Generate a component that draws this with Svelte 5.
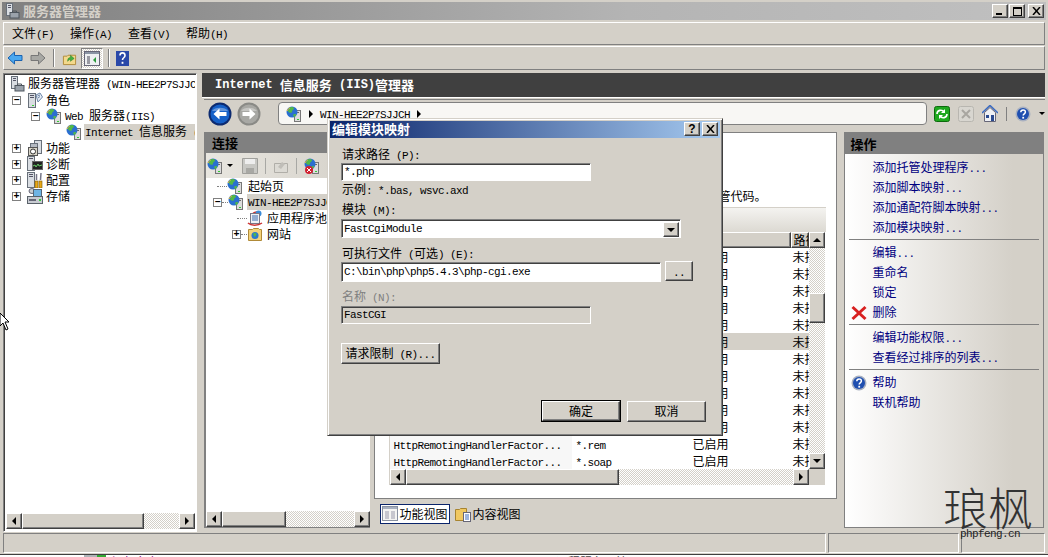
<script>
    const parts = (s) => s.match(/[\x00-\x7f]+|[^\x00-\x7f]+/g);
    const isLatin = (p) => p.charCodeAt(0) < 128;

    const menus = ["文件(F)", "操作(A)", "查看(V)", "帮助(H)"];

    const rows = [
        ["AboMapperCustom-123", "*.aspx", "已启用"],
        ["AssemblyResourceLoader", "WebResource.axd", "已启用"],
        ["ChartImageHandler", "ChartImg.axd", "已启用"],
        ["CGI-exe", "*.exe", "已启用"],
        ["ExtensionlessUrlHandler", "*.", "已启用"],
        ["HttpRemotingHandlerFactor...", "*.rem", "已启用"],
        ["FastCGI", "*.php", "已启用"],
        ["HttpHandler", "*.axd", "已启用"],
        ["ISAPI-dll", "*.dll", "已启用"],
        ["PageHandlerFactory", "*.aspx", "已启用"],
        ["SimpleHandlerFactory", "*.ashx", "已启用"],
        ["HttpRemotingHandlerFactor...", "*.rem", "已启用"],
        ["HttpRemotingHandlerFactor...", "*.soap", "已启用"]
    ];

    const actionGroups = [
        ["添加托管处理程序...", "添加脚本映射...", "添加通配符脚本映射...", "添加模块映射..."],
        ["编辑...", "重命名", "锁定", "删除"],
        ["编辑功能权限...", "查看经过排序的列表..."],
        ["帮助", "联机帮助"]
    ];
</script>

{#snippet t(s)}{#each parts(s) as p}{#if isLatin(p)}<span class="l">{p}</span>{:else}{p}{/if}{/each}{/snippet}

{#snippet server()}
    <svg class="ic" viewBox="0 0 16 16">
        <rect x="2.500" y="0.500" width="6" height="12" fill="#d9dde2" stroke="#68707a" />
        <rect x="4" y="2" width="3" height="1" fill="#556" />
        <rect x="4" y="4" width="3" height="1" fill="#556" />
        <rect x="6" y="9.500" width="9" height="5.500" fill="#9aa2ab" stroke="#4e565e" />
        <path d="M8.500 9.500v-1.500h4v1.500" fill="none" stroke="#4e565e" />
    </svg>
{/snippet}

{#snippet globe()}
    <svg class="ic" viewBox="0 0 16 16">
        <rect x="8.500" y="4.500" width="6" height="11" fill="#dcdcdc" stroke="#777" />
        <rect x="10" y="6" width="3" height="1" fill="#666" />
        <rect x="11" y="13" width="2" height="1" fill="#3c3" />
        <circle cx="6" cy="6" r="5.500" fill="#2a6fd0" />
        <path d="M3 2c2-1.500 5-1 5 .5s-2 1-2 3-2.500 1.500-4 0z" fill="#52b848" />
        <path d="M7 9c1-1.500 3.500-1 3 0s-1 2-2 2z" fill="#52b848" />
        <path d="M1 5c1-2 2-3 3-3" stroke="#f2c230" fill="none" />
    </svg>
{/snippet}

{#snippet roles()}
    <svg class="ic" viewBox="0 0 16 16">
        <rect x="1.500" y="1.500" width="7" height="14" fill="#d9dde2" stroke="#68707a" />
        <rect x="3" y="3" width="4" height="1" fill="#556" />
        <rect x="3" y="5" width="4" height="1" fill="#556" />
        <rect x="5" y="13" width="2" height="1" fill="#3c3" />
        <path d="M9 3l4-2 2.500 4-4.500 5z" fill="#e8edf5" stroke="#6c86a8" />
        <path d="M10.500 4l2.500-1M11 6l2-1.500" stroke="#6c86a8" />
    </svg>
{/snippet}

{#snippet features()}
    <svg class="ic" viewBox="0 0 16 16">
        <rect x="7.500" y="0.500" width="7" height="13" fill="#d9dde2" stroke="#68707a" />
        <rect x="3.500" y="3.500" width="7" height="5" fill="#b4bac2" stroke="#68707a" />
        <rect x="1.500" y="7.500" width="9" height="8" fill="#d8d5c8" stroke="#555" />
        <circle cx="6" cy="11.500" r="2.500" fill="#fff" stroke="#333" />
    </svg>
{/snippet}

{#snippet diag()}
    <svg class="ic" viewBox="0 0 16 16">
        <rect x="0.500" y="0.500" width="7" height="14" fill="#d9dde2" stroke="#68707a" />
        <rect x="2" y="2" width="4" height="1" fill="#556" />
        <rect x="5.500" y="5.500" width="10" height="8" fill="#222" stroke="#666" />
        <path d="M6 10l2-1 1 2 2-3 1 2 3-1" stroke="#6c6" fill="none" />
    </svg>
{/snippet}

{#snippet config()}
    <svg class="ic" viewBox="0 0 16 16">
        <rect x="0.500" y="0.500" width="7" height="15" fill="#d9dde2" stroke="#68707a" />
        <rect x="2" y="2" width="4" height="1" fill="#556" />
        <rect x="2" y="4" width="4" height="1" fill="#556" />
        <rect x="8" y="9" width="3" height="7" fill="#e8a818" stroke="#7a5808" stroke-width="0.600" />
        <rect x="12" y="9" width="3" height="7" fill="#e8a818" stroke="#7a5808" stroke-width="0.600" />
        <path d="M9.500 8V2M13.500 8l.5-7" stroke="#778" stroke-width="1.500" />
    </svg>
{/snippet}

{#snippet storage()}
    <svg class="ic" viewBox="0 0 16 16">
        <ellipse cx="5" cy="3" rx="3" ry="2.500" fill="#c8ccd0" stroke="#667" />
        <rect x="6.500" y="1.500" width="8" height="7" fill="#6eb4e4" stroke="#567" />
        <rect x="0.500" y="8.500" width="15" height="7" fill="#c8ccd2" stroke="#5a626a" />
        <rect x="2" y="11" width="7" height="2" fill="#667" />
        <rect x="12" y="11" width="2" height="2" fill="#3c3" />
    </svg>
{/snippet}

{#snippet tinyPool()}
    <svg class="ic" viewBox="0 0 16 16">
        <path d="M4 7a6 6 0 0 1 7-5" stroke="#c33" fill="none" stroke-width="1.500" />
        <circle cx="11.500" cy="3.500" r="3" fill="#3a8ad8" />
        <rect x="3.500" y="3.500" width="9" height="10" fill="#eef0f4" stroke="#778" />
        <path d="M5 6h6M5 8h6M5 10h6" stroke="#3a6ab0" />
        <path d="M1 13c3 3 10 3 14 0" stroke="#c33" fill="none" stroke-width="1.500" />
    </svg>
{/snippet}

{#snippet siteFolder()}
    <svg class="ic" viewBox="0 0 16 16">
        <path d="M1.500 14.500v-11h4l1-1h5l1 1h2v11z" fill="#f3d27a" stroke="#b08a38" />
        <circle cx="8" cy="9.500" r="3.500" fill="#2a7ad0" />
        <path d="M6 7.500l3-.5 .5 2-2 2z" fill="#52b848" />
    </svg>
{/snippet}

{#snippet arrow(color, edge, flip)}
    <svg class="arrow" class:flip viewBox="0 0 16 14">
        <path d="M1 7l6.500-6v3.500h7.500v5h-7.500v3.500z" fill={color} stroke={edge} />
    </svg>
{/snippet}

{#snippet round(fill, edge, flip)}
    <svg class="roundBtn" class:flip viewBox="0 0 24 24">
        <circle cx="12" cy="12" r="11.500" fill={edge} />
        <circle cx="12" cy="12" r="9.500" fill={fill} />
        <path d="M4 9a9 6 0 0 1 16 0z" fill="#fff" opacity="0.350" />
        <path d="M5.500 12l6-5.500v3.500h7v4h-7v3.500z" fill="#fff" />
    </svg>
{/snippet}

{#snippet help(size)}
    <svg width={size} height={size} viewBox="0 0 16 16">
        <circle cx="8" cy="8" r="7.500" fill="#a8b0c0" />
        <circle cx="8" cy="8" r="6" fill="#1f4fb0" />
        <path d="M5.800 6.200c0-3 4.600-3 4.600-.2 0 1.800-2.200 1.800-2.200 3.500" stroke="#fff" stroke-width="1.500" fill="none" />
        <rect x="7.300" y="10.800" width="1.800" height="1.800" fill="#fff" />
    </svg>
{/snippet}

{#snippet hbar(thumb)}
    <div class="hbar">
        <div class="btn sb"><i class="tri left"></i></div>
        <div class="btn thumb" style="width: {thumb}px"></div>
        <div class="track"></div>
        <div class="btn sb"><i class="tri right"></i></div>
    </div>
{/snippet}

<div class="window">
    <header class="title">
        {@render server()}
        <span class="titleText">服务器管理器</span>
        <div class="winBtns">
            <div class="btn wb"><i class="minGlyph"></i></div>
            <div class="btn wb"><i class="maxGlyph"></i></div>
            <div class="btn wb close">
                <svg width="9" height="8" viewBox="0 0 9 8"><path d="M1 0l7 8M8 0l-7 8" stroke="#000" stroke-width="1.500" fill="none" /></svg>
            </div>
        </div>
    </header>

    <nav class="menu">
        {#each menus as m}
            <span class="menuItem">{@render t(m)}</span>
        {/each}
    </nav>

    <div class="toolbar">
        {@render arrow("#4aa8f0", "#1a62b0", false)}
        {@render arrow("#a8a8a4", "#777", true)}
        <i class="sep first"></i>
        <svg class="folderUp" viewBox="0 0 16 16">
            <path d="M1.500 14.500v-9h4l1-1h8v10z" fill="#f3d98c" stroke="#b08a38" />
            <path d="M6 11c0-3 1-4 3-4V4.500l4 3.500-4 3V9c-1 0-2 .5-3 2z" fill="#42b040" stroke="#2a7a2a" stroke-width="0.500" />
        </svg>
        <div class="toggled">
            <svg width="16" height="15" viewBox="0 0 16 15">
                <rect x="0.500" y="0.500" width="15" height="14" fill="#eef0f2" stroke="#667" />
                <rect x="1" y="1" width="14" height="2" fill="#8a94a4" />
                <path d="M3 6h3M3 8h3M3 10h3M3 12h3" stroke="#445" />
                <path d="M12 6v6l-3-3z" fill="#2a9a3a" />
            </svg>
        </div>
        <i class="sep"></i>
        <svg class="book" viewBox="0 0 13 15">
            <rect width="13" height="15" fill="#2a48a8" />
            <path d="M4 4.500c0-3.500 5-3.500 5 0 0 2.500-2.500 2-2.500 4.500" stroke="#fff" stroke-width="1.600" fill="none" />
            <rect x="5.600" y="10.800" width="1.800" height="2" fill="#fff" />
        </svg>
    </div>

    <div class="main">
        <aside class="treePane">
            <div class="treeBody">
                <div class="node root">{@render server()}<span class="label">{@render t("服务器管理器 (WIN-HEE2P7SJJC")}</span></div>
                <div class="node lv1"><i class="exp">−</i>{@render roles()}<span class="label">角色</span></div>
                <div class="node lv2"><i class="exp">−</i>{@render globe()}<span class="label">{@render t("Web 服务器(IIS)")}</span></div>
                <div class="node lv3">{@render globe()}<span class="label chosen">{@render t("Internet 信息服务 (IIS)管理器")}</span></div>
                <div class="node lv1"><i class="exp">+</i>{@render features()}<span class="label">功能</span></div>
                <div class="node lv1"><i class="exp">+</i>{@render diag()}<span class="label">诊断</span></div>
                <div class="node lv1"><i class="exp">+</i>{@render config()}<span class="label">配置</span></div>
                <div class="node lv1"><i class="exp">+</i>{@render storage()}<span class="label">存储</span></div>
            </div>
            {@render hbar(122)}
        </aside>

        <section class="rightPane">
            <div class="banner">{@render t("Internet 信息服务 (IIS)管理器")}</div>
            <div class="navbar">
                {@render round("#1560c8", "#0c2a70", false)}
                <div class="fwd">{@render round("#a8a8a4", "#8a8a86", true)}</div>
                <div class="address">
                    {@render globe()}
                    <i class="tri right addrTri"></i>
                    <span>{@render t("WIN-HEE2P7SJJCH")}</span>
                    <i class="tri right addrTri"></i>
                </div>
                <div class="navIcons">
                    <svg width="16" height="16" viewBox="0 0 16 16"><rect x="0.500" y="0.500" width="15" height="15" rx="2" fill="#1ea81e" stroke="#0c6a0c" /><path d="M3 8c0-4 5-5 7-2M13 8c0 4-5 5-7 2" stroke="#fff" stroke-width="1.600" fill="none" /><path d="M11 3v4H7zM5 13V9h4z" fill="#fff" /></svg>
                    <svg width="16" height="16" viewBox="0 0 16 16"><rect x="0.500" y="0.500" width="15" height="15" rx="2" fill="#d8d6d0" stroke="#b8b6b0" /><path d="M4 4l8 8M12 4l-8 8" stroke="#a8a6a0" stroke-width="2" /></svg>
                    <svg width="16" height="17" viewBox="0 0 16 17"><path d="M0 8l8-7.500 8 7.500" fill="none" stroke="#3a6ac0" stroke-width="1.600" /><path d="M2.500 7.500l5.500-5 5.500 5v9h-11z" fill="#eef0f4" stroke="#667" /><rect x="9" y="10" width="3" height="6" fill="#2a4a90" /><rect x="4" y="10" width="3" height="3" fill="#2a4a90" /></svg>
                    <i class="navSep"></i>
                    {@render help(16)}
                    <i class="tri down navCaret"></i>
                </div>
            </div>

            <div class="content">
                <div class="connPane">
                    <div class="paneHead">连接</div>
                    <div class="connTools">
                        {@render globe()}
                        <i class="tri down caret"></i>
                        <svg class="ic" viewBox="0 0 16 16"><path d="M.5.5h15v15H.5z" fill="#c8c8c4" stroke="#a0a09c" /><rect x="3" y="1" width="10" height="5" fill="#eee" /><rect x="4" y="10" width="8" height="5" fill="#a8a8a4" /></svg>
                        <i class="vline"></i>
                        <svg class="ic" viewBox="0 0 16 16"><path d="M1.500 14.500v-9h13v9z" fill="#dcdad4" stroke="#b0aea8" /><path d="M5 9l4-5 3 2-4 5z" fill="#c0beb8" /></svg>
                        <i class="vline"></i>
                        <div class="stopGlobe">
                            {@render globe()}
                            <svg class="stopX" width="8" height="8" viewBox="0 0 8 8"><circle cx="4" cy="4" r="4" fill="#d02030" /><path d="M2 2l4 4M6 2l-4 4" stroke="#fff" /></svg>
                        </div>
                    </div>
                    <div class="connTree">
                        <div class="cnode c1"><i class="dash"></i>{@render globe()}<span class="label">起始页</span></div>
                        <div class="cnode c0"><i class="exp">−</i><i class="dash short"></i>{@render globe()}<span class="label chosen">{@render t("WIN-HEE2P7SJJCH")}</span></div>
                        <div class="cnode c2"><i class="dash"></i>{@render tinyPool()}<span class="label">应用程序池</span></div>
                        <div class="cnode c3"><i class="exp">+</i><i class="dash short"></i>{@render siteFolder()}<span class="label">网站</span></div>
                    </div>
                    {@render hbar(64)}
                </div>

                <div class="centerCol">
                    <div class="centerBox">
                        <p class="desc">{@render t("使用此功能指定处理特定请求类型的响应的资源,如 DLL 和托管代码。")}</p>
                        <div class="list">
                            <div class="groupBar"></div>
                            <div class="listMain">
                                <div class="listLeft">
                                    <div class="colHead">
                                        <span class="col c-name btn">名称</span>
                                        <span class="col c-path btn">路径</span>
                                        <span class="col c-state btn">状态</span>
                                        <span class="col c-type btn">路径类型</span>
                                    </div>
                                    {#each rows as row, i}
                                        <div class="row" class:picked={i === 5}>
                                            <span class="col c-name sorted">{@render t(row[0])}</span>
                                            <span class="col c-path">{@render t(row[1])}</span>
                                            <span class="col c-state">{row[2]}</span>
                                            <span class="col c-type">未指定</span>
                                        </div>
                                    {/each}
                                    {@render hbar(213)}
                                </div>
                                <div class="vbar">
                                    <div class="btn sb"><i class="tri up"></i></div>
                                    <div class="track short"></div>
                                    <div class="btn vthumb"></div>
                                    <div class="track"></div>
                                    <div class="btn sb"><i class="tri down"></i></div>
                                    <div class="corner"></div>
                                </div>
                            </div>
                        </div>
                    </div>
                    <div class="tabs">
                        <div class="tab active">
                            <svg width="16" height="15" viewBox="0 0 16 15"><rect x="0.500" y="0.500" width="15" height="14" fill="#f4f4f2" stroke="#8890a0" /><rect x="1" y="1" width="14" height="2" fill="#a8b0c0" /><path d="M3 6h4M3 8h4M3 10h4M3 12h4M9 6h4M9 8h4M9 10h4M9 12h4" stroke="#99a" /></svg>
                            功能视图
                        </div>
                        <div class="tab">
                            <svg width="16" height="16" viewBox="0 0 16 16"><path d="M.5 14.500v-11h4l1-1h6v12z" fill="#f0c860" stroke="#a88430" /><rect x="8.500" y="6.500" width="7" height="9" fill="#fff" stroke="#667" /><path d="M10 9h4M10 11h4M10 13h4" stroke="#3a6ac0" /></svg>
                            内容视图
                        </div>
                    </div>
                </div>

                <div class="actions">
                    <div class="paneHead">操作</div>
                    <div class="actionBody">
                        {#each actionGroups as group, g}
                            {#if g > 0}<hr />{/if}
                            {#each group as a}
                                <div class="action">
                                    {#if a === "删除"}
                                        <svg class="actIcon" width="16" height="14" viewBox="0 0 16 14"><path d="M1.500 1l13 12M14.500 1l-13 12" stroke="#d82020" stroke-width="3" /></svg>
                                    {:else if a === "帮助"}
                                        <span class="actIcon">{@render help(16)}</span>
                                    {/if}
                                    {@render t(a)}
                                </div>
                            {/each}
                        {/each}
                    </div>
                </div>
            </div>
        </section>
    </div>

    <footer class="status">
        <div class="cell wide"></div>
        <div class="cell mid"></div>
        <div class="cell last"></div>
    </footer>

    <div class="behind">
        <i class="b0"></i>
        <span class="b3">添加角色</span>
        <span class="b1">{@render t("Bing")}</span>
        <span class="b2">远程服务器管理工具</span>
    </div>

    <div class="dialog">
        <div class="dlgTitle">
            <span>编辑模块映射</span>
            <div class="dlgBtns">
                <div class="btn wb q">?</div>
                <div class="btn wb close">
                    <svg width="9" height="8" viewBox="0 0 9 8"><path d="M1 0l7 8M8 0l-7 8" stroke="#000" stroke-width="1.500" fill="none" /></svg>
                </div>
            </div>
        </div>
        <form class="dlgForm">
            <label class="f1">{@render t("请求路径 (P):")}</label>
            <div class="sunken w249 h17">{@render t("*.php")}</div>
            <div class="hint">{@render t("示例: *.bas, wsvc.axd")}</div>
            <label class="f2">{@render t("模块 (M):")}</label>
            <div class="sunken w339 h19 combo">
                {@render t("FastCgiModule")}
                <div class="btn comboBtn"><i class="tri down"></i></div>
            </div>
            <label class="f3">{@render t("可执行文件 (可选) (E):")}</label>
            <div class="execRow">
                <div class="sunken w319 h20">{@render t("C:\\bin\\php\\php5.4.3\\php-cgi.exe")}</div>
                <div class="btn dots">{@render t("..")}</div>
            </div>
            <label class="f4 off">{@render t("名称 (N):")}</label>
            <div class="sunken w249 h17 gray">{@render t("FastCGI")}</div>
            <div class="btn limit">{@render t("请求限制 (R)...")}</div>
            <div class="dlgFoot">
                <div class="default"><div class="btn push">确定</div></div>
                <div class="btn push cancel">取消</div>
            </div>
        </form>
    </div>

    <svg class="cursor" width="11" height="18" viewBox="0 0 11 18"><path d="M0 0l9 9H5l3 7-2 1-3-7-3 3z" fill="#fff" stroke="#000" /></svg>

    <div class="mark">
        <span class="markBig">琅枫</span>
        <span class="markUrl">phpfeng.cn</span>
    </div>
</div>

<style>
    :global(body) {
        margin: 0;
        background: #fff;
    }

    .window {
        position: relative;
        width: 1048px;
        height: 557px;
        overflow: hidden;
        background: #d4d0c8;
        font: 12px/16px "Noto Sans CJK SC", "Liberation Sans", sans-serif;
        color: #000;
        display: flex;
        flex-direction: column;
    }

    .l {
        font-family: "Liberation Mono", monospace;
        font-size: 11px;
        letter-spacing: -0.6px;
        white-space: pre;
    }

    .ic {
        width: 16px;
        height: 16px;
        flex: none;
    }

    i {
        font-style: normal;
    }

    .btn {
        box-sizing: border-box;
        background: #d4d0c8;
        border: 1px solid;
        border-color: #fff #404040 #404040 #fff;
        box-shadow: inset -1px -1px 0 #808080;
    }

    .sunken {
        box-sizing: border-box;
        background: #fff;
        border: 1px solid;
        border-color: #808080 #fff #fff #808080;
        box-shadow: inset 1px 1px 0 #404040;
        padding: 0 2px;
        display: flex;
        align-items: center;
        white-space: pre;
    }

    .tri {
        display: block;
        width: 0;
        height: 0;
        border: 4px solid transparent;
    }

    .tri.left {
        border-left-width: 0;
        border-right-color: #000;
    }

    .tri.right {
        border-right-width: 0;
        border-left-color: #000;
    }

    .tri.up {
        border-top-width: 0;
        border-bottom-color: #000;
    }

    .tri.down {
        border-bottom-width: 0;
        border-top-color: #000;
    }

    /* title bar */
    .title {
        height: 18px;
        margin: 2px 2px 2px;
        padding: 0 2px;
        background: linear-gradient(90deg, #808080, #b4b4b4 60%, #c0c0c0);
        display: flex;
        align-items: center;
        gap: 3px;
        flex: none;
    }

    .titleText {
        font-size: 13px;
        font-weight: 700;
        color: #d4d0c8;
    }

    .winBtns {
        margin-left: auto;
        display: flex;
        gap: 1px;
    }

    .wb {
        width: 16px;
        height: 14px;
        display: flex;
        align-items: center;
        justify-content: center;
    }

    .minGlyph {
        width: 6px;
        height: 2px;
        background: #000;
        margin-top: 6px;
        margin-right: 3px;
    }

    .maxGlyph {
        box-sizing: border-box;
        width: 9px;
        height: 9px;
        border: 1px solid #000;
        border-top-width: 2px;
    }

    .winBtns .close {
        margin-left: 2px;
    }

    /* menu and toolbar */
    .menu,
    .toolbar {
        box-sizing: border-box;
        margin: 0 3px 1px;
        border-top: 1px solid #fff;
        border-left: 1px solid #fff;
        border-right: 1px solid #808080;
        border-bottom: 1px solid #808080;
        display: flex;
        align-items: center;
        flex: none;
    }

    .menu {
        height: 23px;
        padding-left: 8px;
    }

    .menuItem {
        width: 58px;
    }

    .toolbar {
        height: 24px;
        padding-left: 3px;
        margin-bottom: 3px;
    }

    .arrow {
        width: 16px;
        height: 14px;
        margin-right: 7px;
    }

    .flip {
        transform: scaleX(-1);
    }

    .sep {
        width: 1px;
        height: 18px;
        background: #808080;
        border-right: 1px solid #fff;
        margin: 0 5px 0 0;
    }

    .sep.first {
        margin-right: 7px;
    }

    .folderUp {
        width: 15px;
        height: 15px;
        margin: 0 4px 0 0;
    }

    .toggled {
        box-sizing: border-box;
        width: 22px;
        height: 21px;
        margin-right: 5px;
        border: 1px solid;
        border-color: #808080 #fff #fff #808080;
        background: repeating-conic-gradient(#d4d0c8 0 25%, #fff 0 50%) 0 0 / 2px 2px;
        display: flex;
        align-items: center;
        justify-content: center;
    }

    .book {
        width: 13px;
        height: 15px;
        margin-left: 1px;
    }

    /* main split */
    .main {
        flex: none;
        height: 459px;
        display: flex;
        padding: 0 3px 0 3px;
        gap: 5px;
    }

    .treePane {
        box-sizing: border-box;
        width: 194px;
        background: #fff;
        border: 1px solid;
        border-color: #808080 #fff #fff #808080;
        box-shadow: inset 1px 1px 0 #404040;
        padding: 2px 1px 2px 2px;
        display: flex;
        flex-direction: column;
    }

    .treeBody {
        flex: 1;
        overflow: hidden;
    }

    .node,
    .cnode {
        height: 16px;
        display: flex;
        align-items: center;
        white-space: nowrap;
        overflow: hidden;
    }

    .root {
        padding-left: 3px;
    }

    .root .label {
        margin-left: 3px;
    }

    .lv1 {
        padding-left: 6px;
    }

    .lv1 .ic {
        margin-left: 6px;
    }

    .lv1 .label {
        margin-left: 3px;
    }

    .lv2 {
        padding-left: 25px;
    }

    .lv2 .ic {
        margin-left: 6px;
    }

    .lv2 .label {
        margin-left: 3px;
    }

    .lv3 {
        padding-left: 60px;
    }

    .lv3 .label {
        margin-left: 2px;
    }

    .chosen {
        background: #d4d0c8;
        line-height: 16px;
        padding: 0 2px 0 1px;
    }

    .exp {
        box-sizing: border-box;
        width: 9px;
        height: 9px;
        border: 1px solid #808080;
        background: #fff;
        font: 700 10px/7px "Liberation Mono", monospace;
        text-align: center;
        flex: none;
    }

    /* scrollbars */
    .hbar {
        height: 16px;
        display: flex;
        flex: none;
    }

    .sb {
        width: 16px;
        height: 16px;
        flex: none;
        display: flex;
        align-items: center;
        justify-content: center;
    }

    .thumb {
        flex: none;
    }

    .track {
        flex: 1;
        background: repeating-conic-gradient(#d4d0c8 0 25%, #fff 0 50%) 0 0 / 2px 2px;
    }

    /* right side */
    .rightPane {
        box-sizing: border-box;
        width: 843px;
        display: flex;
        flex-direction: column;
    }

    .banner {
        height: 24px;
        margin-bottom: 1px;
        border-bottom: 1px solid #fff;
        background: #404040;
        color: #fff;
        font-size: 13px;
        font-weight: 700;
        padding-left: 13px;
        display: flex;
        align-items: center;
        white-space: pre;
        flex: none;
    }

    .banner .l {
        font-size: 12px;
        font-weight: 700;
        letter-spacing: 0;
    }

    .navbar {
        height: 30px;
        margin-left: 2px;
        border-top: 1px solid #808080;
        box-sizing: border-box;
        display: flex;
        align-items: center;
        padding: 0 0 2px 4px;
        flex: none;
    }

    .roundBtn {
        width: 24px;
        height: 24px;
        flex: none;
    }

    .fwd {
        margin-left: 5px;
        height: 24px;
    }

    .address {
        box-sizing: border-box;
        width: 650px;
        height: 23px;
        margin-left: 17px;
        padding-left: 7px;
        background: #f8f7f4;
        border: 1px solid #808080;
        border-radius: 4px;
        display: flex;
        align-items: center;
        gap: 7px;
    }

    .addrTri {
        border-width: 4px 0 4px 4px;
    }

    .navIcons {
        margin-left: 7px;
        display: flex;
        align-items: center;
        gap: 8px;
    }

    .navSep {
        width: 1px;
        height: 14px;
        background: #808080;
    }

    .navCaret {
        margin-left: 0;
        border-width: 3px 3px 0;
    }

    .content {
        flex: 1;
        min-height: 0;
        display: flex;
        padding: 3px 1px 4px 2px;
    }

    .connPane {
        box-sizing: border-box;
        width: 166px;
        background: #fff;
        border-left: 2px solid #808080;
        border-bottom: 1px solid #808080;
        display: flex;
        flex-direction: column;
    }

    .paneHead {
        height: 21px;
        background: #808080;
        font-size: 13px;
        font-weight: 700;
        line-height: 21px;
        padding-left: 6px;
        flex: none;
    }

    .connTools {
        height: 25px;
        background: linear-gradient(90deg, #e8e6e0, #d4d0c8);
        display: flex;
        align-items: center;
        gap: 4px;
        padding-left: 1px;
        flex: none;
    }

    .caret {
        border-width: 3px 3px 0;
        margin-right: 5px;
    }

    .vline {
        width: 1px;
        height: 16px;
        background: #a8a8a4;
        margin: 0 3px;
    }

    .stopGlobe {
        position: relative;
        height: 16px;
    }

    .stopX {
        position: absolute;
        left: 1px;
        bottom: 0;
    }

    .connTree {
        flex: 1;
        padding-top: 0;
        overflow: hidden;
    }

    .dash {
        width: 10px;
        border-top: 1px dotted #808080;
        flex: none;
    }

    .dash.short {
        width: 6px;
    }

    .cnode {
        padding-left: 7px;
    }

    .c1 {
        padding-left: 11px;
    }

    .c1 .label {
        margin-left: 5px;
    }

    .c0 .label {
        margin-left: 3px;
    }

    .c2 {
        padding-left: 31px;
    }

    .c2 .label {
        margin-left: 4px;
    }

    .c3 {
        padding-left: 26px;
    }

    .c3 .label {
        margin-left: 4px;
    }

    .centerCol {
        width: 463px;
        margin-left: 4px;
        display: flex;
        flex-direction: column;
        flex: none;
    }

    .centerBox {
        box-sizing: border-box;
        height: 367px;
        background: #fff;
        border: 1px solid #808080;
        padding: 0 0 0 9px;
        overflow: hidden;
    }

    .desc {
        margin: 55px 0 3px 11px;
        height: 16px;
        white-space: nowrap;
    }

    .list {
        width: 436px;
        margin-left: 5px;
        border-left: 1px solid #d4d0c8;
    }

    .groupBar {
        height: 25px;
        background: linear-gradient(#f4f3f0, #dcd9d2);
        border-top: 1px solid #d4d0c8;
        box-sizing: border-box;
    }

    .listMain {
        display: flex;
    }

    .listLeft {
        width: 419px;
    }

    .colHead {
        display: flex;
        height: 16px;
        line-height: 14px;
    }

    .col {
        box-sizing: border-box;
        flex: none;
        white-space: nowrap;
        overflow: hidden;
        padding-left: 4px;
    }

    .c-name {
        width: 182px;
    }

    .c-path {
        width: 117px;
    }

    .c-state {
        width: 102px;
    }

    .c-type {
        width: 18px;
        padding-left: 2px;
    }

    .row {
        display: flex;
        height: 17px;
        line-height: 17px;
    }

    .sorted {
        background: #f7f7f7;
    }

    .picked,
    .picked .sorted {
        background: #d4d0c8;
    }

    .vbar {
        width: 16px;
        display: flex;
        flex-direction: column;
        height: 253px;
    }

    .vbar .track {
        flex: 1;
    }

    .vbar .track.short {
        flex: none;
        height: 45px;
    }

    .vthumb {
        height: 30px;
        flex: none;
    }

    .corner {
        height: 16px;
        flex: none;
        background: #d4d0c8;
    }

    .tabs {
        display: flex;
        align-items: center;
        height: 25px;
        padding: 2px 0 0 6px;
        gap: 3px;
    }

    .tab {
        box-sizing: border-box;
        height: 20px;
        display: flex;
        align-items: center;
        gap: 2px;
        padding: 0 1px;
        white-space: nowrap;
        border: 1px solid transparent;
    }

    .tab.active {
        border-color: #0a246a;
        background: #fff;
    }

    .actions {
        box-sizing: border-box;
        width: 201px;
        margin-left: 7px;
        border: 1px solid #808080;
        background: linear-gradient(90deg, #fff, #d4d0c8 85%);
        display: flex;
        flex-direction: column;
    }

    .actionBody {
        padding-top: 3px;
        color: #00007f;
    }

    .action {
        height: 20px;
        line-height: 20px;
        padding-left: 28px;
        position: relative;
    }

    .actIcon {
        position: absolute;
        left: 6px;
        top: 3px;
        display: block;
        height: 16px;
    }

    hr {
        height: 1px;
        border: 0;
        margin: 2px 4px 2px;
        background: #808080;
    }

    /* status bar */
    .status {
        flex: none;
        height: 20px;
        margin: 1px 3px 1px;
        display: flex;
        gap: 2px;
    }

    .cell {
        box-sizing: border-box;
        border: 1px solid;
        border-color: #808080 #fff #fff #808080;
    }

    .wide {
        width: 823px;
    }

    .mid {
        width: 131px;
    }

    .last {
        flex: 1;
    }

    .behind {
        border-top: 1px solid #404040;
        background: #fff;
        flex: 1;
        overflow: hidden;
        line-height: 14px;
        color: #444;
        white-space: nowrap;
        display: flex;
    }

    .b0 {
        width: 22px;
        height: 6px;
        margin-left: 84px;
        background: linear-gradient(90deg, #b0b4b8 60%, #3a3 60%);
    }

    .b3 {
        margin-left: 6px;
        width: 318px;
        color: #800080;
    }

    .b1 {
        width: 126px;
    }

    .b1 .l {
        font-weight: 700;
    }

    /* dialog */
    .dialog {
        position: absolute;
        left: 327px;
        top: 118px;
        box-sizing: border-box;
        width: 396px;
        height: 318px;
        background: #d4d0c8;
        border: 1px solid;
        border-color: #d4d0c8 #404040 #404040 #d4d0c8;
        box-shadow: inset 1px 1px 0 #fff, inset -1px -1px 0 #808080;
        padding: 2px 2px 2px 2px;
    }

    .dlgTitle {
        height: 17px;
        background: linear-gradient(90deg, #0a246a, #a6caf0);
        color: #fff;
        font-size: 13px;
        font-weight: 700;
        line-height: 15px;
        display: flex;
        align-items: flex-start;
        padding-left: 2px;
    }

    .dlgBtns {
        margin-left: auto;
        margin-right: 2px;
        margin-top: 1px;
        display: flex;
        gap: 2px;
    }

    .q {
        color: #000;
        font: 700 12px/12px "Liberation Sans", sans-serif;
    }

    .dlgForm {
        padding: 8px 0 0 11px;
        display: flex;
        flex-direction: column;
        align-items: flex-start;
    }

    label {
        display: block;
        height: 16px;
        margin-left: 1px;
    }

    .f1 {
        height: 17px;
    }

    .w249 {
        width: 250px;
    }

    .w339 {
        width: 340px;
    }

    .w319 {
        width: 320px;
    }

    .h17 {
        height: 18px;
    }

    .h19 {
        height: 19px;
    }

    .h20 {
        height: 20px;
    }

    .hint {
        height: 16px;
        margin: 0 0 0 1px;
    }

    .f2 {
        margin-top: 4px;
        height: 18px;
    }

    .f3 {
        margin-top: 7px;
        height: 17px;
    }

    .f4 {
        margin-top: 6px;
        height: 18px;
    }

    .off {
        color: #808080;
    }

    .gray {
        background: #d4d0c8;
    }

    .combo {
        position: relative;
        justify-content: flex-start;
    }

    .comboBtn {
        position: absolute;
        right: 1px;
        top: 2px;
        width: 16px;
        height: 15px;
        display: flex;
        align-items: center;
        justify-content: center;
    }

    .execRow {
        display: flex;
        gap: 4px;
    }

    .dots {
        width: 28px;
        height: 20px;
        text-align: center;
        line-height: 17px;
        margin-top: -1px;
    }

    .limit {
        width: 99px;
        height: 21px;
        margin-top: 19px;
        text-align: center;
        line-height: 18px;
        white-space: pre;
    }

    .dlgFoot {
        display: flex;
        align-items: center;
        gap: 6px;
        margin: 36px 0 0 200px;
    }

    .default {
        border: 1px solid #000;
    }

    .push {
        width: 79px;
        height: 21px;
        text-align: center;
        line-height: 18px;
    }

    .default .push {
        width: 78px;
        height: 20px;
        line-height: 17px;
    }

    .cursor {
        position: absolute;
        left: 0;
        top: 313px;
    }

    .mark {
        position: absolute;
        left: 943px;
        top: 483px;
        width: 100px;
        pointer-events: none;
    }

    .markBig {
        display: block;
        font: 300 45px/48px "Noto Sans CJK SC", sans-serif;
        color: #333;
        white-space: nowrap;
    }

    .markUrl {
        position: absolute;
        left: 17px;
        top: 44px;
        font: 11px/14px "Liberation Mono", monospace;
        letter-spacing: -0.6px;
        color: #222;
    }
</style>
